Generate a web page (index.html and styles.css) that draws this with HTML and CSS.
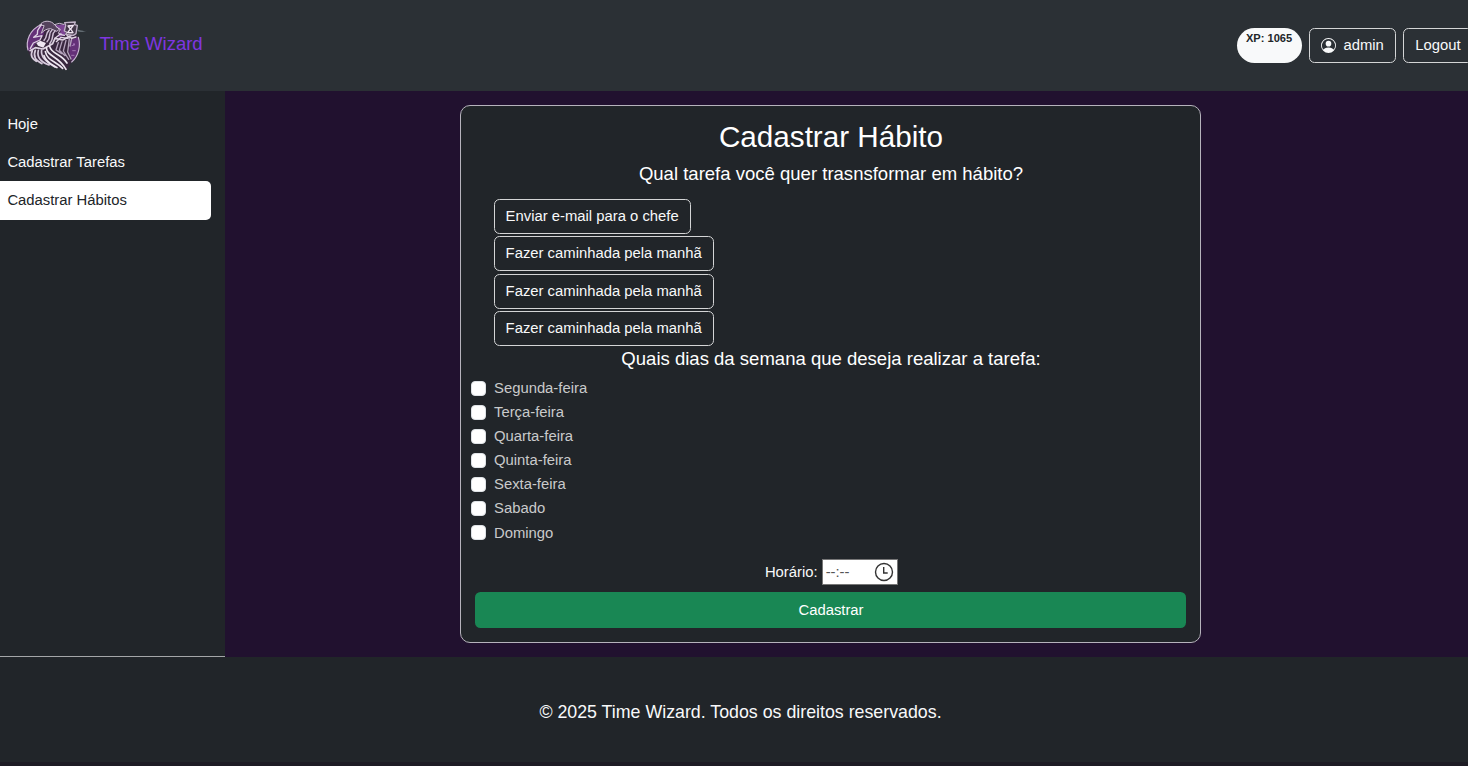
FILE: index.html
```html
<!DOCTYPE html>
<html lang="pt-br">
<head>
<meta charset="utf-8">
<title>Time Wizard</title>
<link rel="stylesheet" href="styles.css">
</head>
<body>
<header class="topbar">
  <a class="brand">
    <svg class="logo" viewBox="0 0 270 228" fill="none" stroke-linecap="round" stroke-linejoin="round">
      <path d="M92 50C62 64 46 95 53 124C57 142 66 151 78 161L118 174 170 186 186 160C207 141 214 112 205 86L166 50 132 52Z" fill="#39273f"/>
      <path d="M92 50C60 65 46 98 54 128L66 126 76 108 100 82 104 66Z" fill="#643078"/>
      <path d="M180 96L205 88C212 112 205 142 186 160L178 134Z" fill="#643078"/>
      <path d="M136 52L164 48 166 82 144 88 152 70Z" fill="#7d4594"/>
      <path d="M92 50C60 65 46 98 54 126M205 88C213 113 206 144 185 162" stroke="#cdb9d6" stroke-width="3.5"/>
      <path d="M90 50C98 38 117 36 130 46L148 64 140 70 122 62C111 62 101 67 94 76L102 54Z" fill="#54435c" stroke="#c9bbcf" stroke-width="3"/>
      <path d="M94 50L83 67 82 79 71 88 96 83 90 96 70 105 61 121" stroke="#ddd0e2" stroke-width="4"/>
      <path d="M132 50Q149 42 162 49M138 56L151 64 145 76 155 78" stroke="#cdbdd4" stroke-width="3"/>
      <path d="M79 105L91 98 108 105 100 119 84 113Z" fill="#eee6f1"/>
      <path d="M117 67C103 80 115 85 102 97M126 66C112 79 126 86 111 101M135 69C122 79 135 87 119 108" stroke="#cdbfd3" stroke-width="4.5"/>
      <path d="M60 128L76 119 99 123 128 107 135 91 158 96 185 82" stroke="#ded3e2" stroke-width="5"/>
      <path d="M67 128C59 145 69 153 79 160M76 127C67 148 82 160 96 167M85 127C79 151 98 164 117 171M95 126C90 150 115 166 135 177" stroke="#d6cbdc" stroke-width="5"/>
      <path d="M109 119C111 146 146 143 168 184M119 115C124 138 154 137 171 165M106 131C111 158 139 160 158 181M102 143C108 163 127 170 141 179" stroke="#eee7f1" stroke-width="5"/>
      <path d="M145 104L138 126 155 137M156 101L148 127 165 143M168 97L160 129 176 154M178 92L173 132 183 153M186 88L180 114" stroke="#b4a3bc" stroke-width="4"/>
      <path d="M135 91L150 79 163 82M139 101L153 88 174 91M171 83L185 91 198 87" stroke="#e1d7e5" stroke-width="4"/>
      <path d="M186 113L193 111M188 128L196 128M185 142L192 142" stroke="#a277b3" stroke-width="3"/>
      <circle cx="192" cy="109" r="3" fill="#a873b9"/>
      <path d="M164 44L196 42 193 50 202 52 198 77 190 82 167 79 171 73 163 69 167 52Z" fill="#433749" stroke="#c2b4c8" stroke-width="4"/>
      <path d="M174 54L190 52 182 63 189 74 173 74 181 63Z" fill="#30283a" stroke="#eee4f0" stroke-width="4"/>
      <path d="M177 54L188 53M176 74L187 74" stroke="#eee4f0" stroke-width="4"/>
      <path d="M202 64Q213 71 231 68Q213 75 203 70Z" fill="#59636a"/>
      <path d="M205 68L219 70" stroke="#727a80" stroke-width="2"/>
    </svg>
    <span>Time Wizard</span>
  </a>
  <div class="account">
    <span class="xp">XP: 1065</span>
    <button class="btn user">
      <svg class="person" viewBox="0 0 16 16" fill="currentColor"><path d="M11 6a3 3 0 1 1-6 0 3 3 0 0 1 6 0"/><path fill-rule="evenodd" d="M0 8a8 8 0 1 1 16 0A8 8 0 0 1 0 8m8-7a7 7 0 0 0-5.468 11.37C3.242 11.226 4.805 10 8 10s4.757 1.225 5.468 2.37A7 7 0 0 0 8 1"/></svg>
      <span>admin</span>
    </button>
    <button class="btn">Logout</button>
  </div>
</header>
<div class="content">
  <nav class="sidebar">
    <a class="nav-link">Hoje</a>
    <a class="nav-link">Cadastrar Tarefas</a>
    <a class="nav-link active">Cadastrar Hábitos</a>
  </nav>
  <main>
    <form class="card">
      <h1>Cadastrar Hábito</h1>
      <h2>Qual tarefa você quer trasnsformar em hábito?</h2>
      <div class="tasks">
        <button type="button" class="btn">Enviar e-mail para o chefe</button>
        <button type="button" class="btn">Fazer caminhada pela manhã</button>
        <button type="button" class="btn">Fazer caminhada pela manhã</button>
        <button type="button" class="btn">Fazer caminhada pela manhã</button>
      </div>
      <h2>Quais dias da semana que deseja realizar a tarefa:</h2>
      <div class="days">
        <label><input type="checkbox">Segunda-feira</label>
        <label><input type="checkbox">Terça-feira</label>
        <label><input type="checkbox">Quarta-feira</label>
        <label><input type="checkbox">Quinta-feira</label>
        <label><input type="checkbox">Sexta-feira</label>
        <label><input type="checkbox">Sabado</label>
        <label><input type="checkbox">Domingo</label>
      </div>
      <div class="schedule">
        <span>Horário:</span>
        <span class="time"><span>--:--</span>
          <svg viewBox="0 0 20 20" fill="none" stroke="#333" stroke-width="1.4"><circle cx="10" cy="10" r="8.5"/><path d="M9.7 5v6h4"/></svg>
        </span>
      </div>
      <button type="button" class="submit">Cadastrar</button>
    </form>
  </main>
</div>
<footer>© 2025 Time Wizard. Todos os direitos reservados.</footer>
</body>
</html>
```

FILE: styles.css
```css
* { box-sizing: border-box; }
html { font-size: 14.83px; }
body { margin: 0; height: 766px; overflow: hidden; background: #1d1b24; color: #f8f9fa; font: 1rem/1.5 "Liberation Sans", Arial, sans-serif; }
.topbar { width: 1480px; height: 91px; background: #2b3035; display: flex; justify-content: space-between; }
.brand { display: flex; height: 87px; padding-left: 10px; align-items: center; font-size: 18.5px; color: #7f36e0; }
.brand span { margin-left: -0.5px; }
.logo { width: 90px; height: 76px; margin-top: 5px; }
.account { display: flex; align-items: flex-start; gap: 7.4px; padding: 28px 7.4px 0 0; }
.btn { height: 35px; padding: 0 11px; border: 1px solid #d4d5d6; border-radius: 5.5px; background: transparent; color: #f8f9fa; font: inherit; line-height: 33px; white-space: nowrap; }
.user { display: flex; align-items: center; gap: 7.5px; }
.person { width: 15px; height: 15px; }
.xp { width: 65px; height: 35px; padding-top: 5px; border-radius: 18px; background: #f8f9fa; color: #212529; font-size: 11.1px; line-height: 11px; font-weight: 700; text-align: center; }
.content { display: flex; height: 566px; background: #21112f; }
.sidebar { width: 225px; padding: 14px 14px 0 0; background: #212529; border-bottom: 1px solid #a4a6a8; }
.nav-link { display: block; height: 38px; padding-left: 7.4px; line-height: 38px; }
.active { height: 39px; background: #fff; color: #212529; border-radius: 0 5px 5px 0; }
main { width: 1211px; padding-top: 14px; display: flex; justify-content: center; align-items: flex-start; }
.card { width: 741px; height: 538px; flex: none; background: #212529; border: 1px solid #b6b3bc; border-radius: 10px; padding: 13px 14px; }
h1, h2 { margin: 0; font-weight: 400; text-align: center; color: #fff; }
h1 { font-size: 29.66px; line-height: 36px; padding-left: 1px; }
h2 { font-size: 18.54px; line-height: 22px; margin-top: 8px; padding-left: 1px; }
.tasks { display: flex; flex-direction: column; align-items: flex-start; gap: 2.1px; padding: 14px 0 0 18.6px; }
.tasks .btn { height: 35.2px; }
.tasks + h2 { margin-top: 2px; }
.days { margin: 6px 0 0 -4px; }
.days label { display: flex; align-items: center; height: 24.1px; color: #c9cacb; }
.days input { appearance: none; width: 15px; height: 15px; margin: 0 8px 0 0; background: #fff; border: 1px solid #dee2e6; border-radius: 4px; }
.schedule { display: flex; justify-content: center; align-items: center; gap: 4px; height: 26px; margin: 14px 0 7.5px; padding-left: 1.5px; }
.time { display: flex; align-items: center; justify-content: space-between; width: 76px; height: 26px; padding: 0 3px; background: #fff; border: 1px solid #777; color: #555; }
.time svg { width: 20px; height: 20px; }
.submit { display: block; width: 100%; height: 35.5px; padding: 0 0 0 1px; border: 0; border-radius: 5.5px; background: #198754; color: #fff; font: inherit; }
footer { width: 1481px; height: 105px; background: #212529; text-align: center; padding-top: 5px; font-size: 17.8px; line-height: 100px; }
```
